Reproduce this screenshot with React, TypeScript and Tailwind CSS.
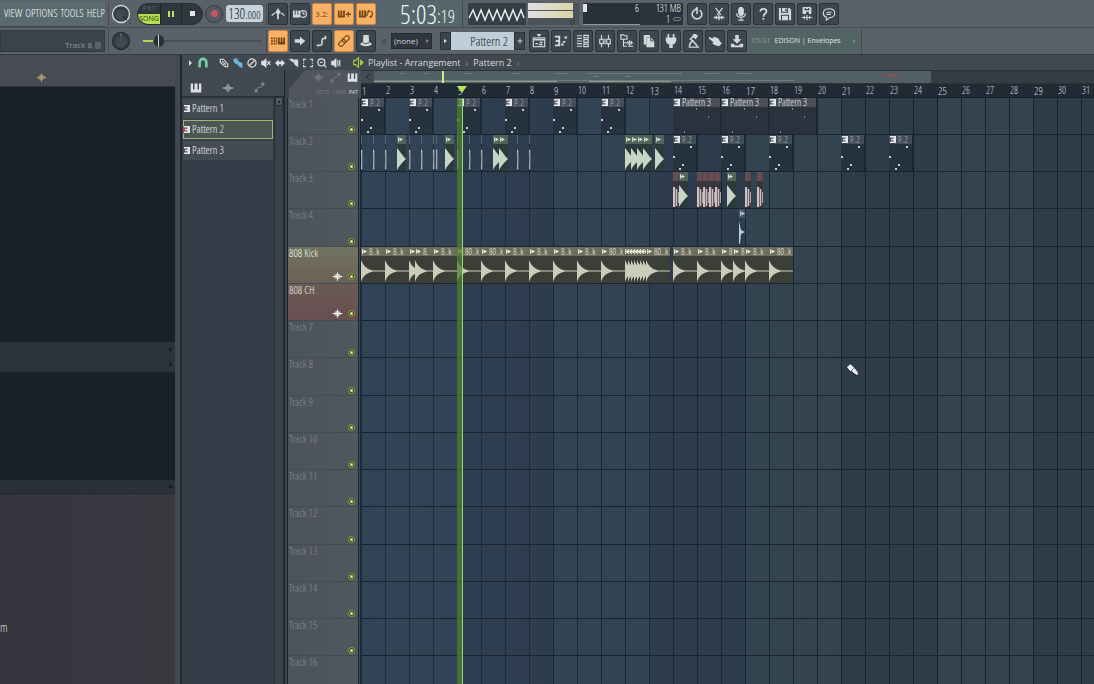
import type { ReactNode } from "react";
import clsx from "clsx";

const BAR = 24;
const narrow = "font-['Open_Sans_Condensed_Light','Roboto_Condensed',sans-serif]";
const open = "font-['Open_Sans','Noto_Sans',sans-serif]";

type Clip = { kind: string; at: number; len: number; label?: string };

const pattern2 = (at: number): Clip => ({ kind: "notes", at, len: 1, label: "P..2" });
const pattern3 = (at: number): Clip => ({ kind: "notes3", at, len: 2, label: "Pattern 3" });
const tick = (at: number): Clip => ({ kind: "tick", at, len: 0.125 });
const hit = (at: number, len = 0.375): Clip => ({ kind: "hit", at, len });
const hat = (at: number): Clip => ({ kind: "hat", at, len: 0.25 });
const kick = (at: number, len = 1, label = "8..k"): Clip => ({ kind: "kick", at, len, label });

const tracks: { name: string; tone?: string; clips: Clip[] }[] = [
  {
    name: "Track 1",
    clips: [0, 2, 4, 6, 8, 10].map(pattern2).concat([13, 15, 17].map(pattern3)),
  },
  {
    name: "Track 2",
    clips: [
      ...[0, 0.5, 1, 2, 2.5, 3, 3.125, 4, 4.5, 5, 6.5, 7].map(tick),
      hit(1.5), hit(3.5), hit(5.5, 0.25), hit(5.75),
      hit(11, 0.25), hit(11.25, 0.25), hit(11.5, 0.25), hit(11.75, 0.375), hit(12.25),
      ...[13, 15, 17, 20, 22].map(pattern2),
    ],
  },
  {
    name: "Track 3",
    clips: [
      hat(13), hit(13.25), hat(14), hat(14.25), hat(14.5), hat(14.75),
      hit(15.25), hat(16), hat(16.5),
    ],
  },
  { name: "Track 4", clips: [{ kind: "snap", at: 15.75, len: 0.25 }] },
  {
    name: "808 Kick",
    tone: "kick",
    clips: [
      kick(0), kick(1), kick(2, 0.25, ""), kick(2.25, 0.75, "8."), kick(3), kick(4, 1, "80..k"),
      kick(5, 1, "80..k"), kick(6), kick(7), kick(8), kick(9), kick(10, 1, "80..k"),
      ...[11, 11.125, 11.25, 11.375, 11.5, 11.625, 11.75].map((at) => kick(at, 0.125, "")),
      kick(11.875, 1, "80..k"),
      kick(13), kick(14), kick(15, 0.5, "8"), kick(15.5, 0.5, "8"), kick(16), kick(17, 1, "80..k"),
    ],
  },
  { name: "808 CH", tone: "hat", clips: [] },
  ...[7, 8, 9, 10, 11, 12, 13, 14, 15, 16].map((n) => ({ name: `Track ${n}`, clips: [] })),
];

function Icon({ children, size = "size-4", className }: { children: ReactNode; size?: string; className?: string }) {
  return (
    <svg viewBox="0 0 16 16" className={clsx("shrink-0", size, className)} fill="none" stroke="currentColor" strokeWidth="1.3" aria-hidden="true">
      {children}
    </svg>
  );
}

const wavePath = <path d="M1 8h14M4 6.500v3M6 4.500v7M8 2v12M10 4.500v7M12 6.500v3" strokeWidth="1.700" />;
const pianoPath = <path d="M1 2h3v8h2V2h4v8h2V2h3v12H1z" fill="currentColor" stroke="none" />;
const linkPath = (
  <>
    <path d="M3 13l2-4 6-2 2-4" />
    <circle cx="3" cy="13" r="1.800" fill="currentColor" />
    <circle cx="13" cy="3" r="1.800" fill="currentColor" />
  </>
);

const glyphs: Record<string, ReactNode> = {
  metronome: (
    <>
      <path d="M8 14V4" strokeWidth="2" />
      <path d="M1 10c1-2 2-3 4-3M15 10c-1-2-2-3-4-3" strokeWidth="1.500" />
      <path d="M8 1l3 5-3 3-3-3z" fill="currentColor" stroke="none" />
    </>
  ),
  wait: (
    <>
      <path d="M0 4h2v5h1V4h2v5h1V4h2v8H0z" fill="currentColor" stroke="none" />
      <circle cx="11.500" cy="8" r="3.800" />
      <path d="M11.500 5.500V8h2" />
    </>
  ),
  overdub: <path d="M1 4h2v6h1V4h2v6h1V4h2v8H1zM12 5.500h1.500v2H16V9h-2.500v2H12V9h-2V7.500h2z" fill="currentColor" stroke="none" />,
  loop: (
    <>
      <path d="M0 4h2v6h1V4h2v6h1V4h2v8H0z" fill="currentColor" stroke="none" />
      <path d="M10 10.500a3.300 3.300 0 0 1 1-5.500M13.500 5a3.300 3.300 0 0 1 0 6" />
      <path d="M10 3l3 1.500-2 2.500zM14.500 13l-3-1.500 2-2z" fill="currentColor" stroke="none" />
    </>
  ),
  typing: <path d="M0 4h2v2H0zM3 4h2v2H3zM0 7h2v2H0zM3 7h2v2H3zM0 10h2v2H0zM3 10h2v2H3zM6 4h1v8H6zM8 4h2v5h1V4h2v5h1V4h2v8H8z" fill="currentColor" stroke="none" />,
  arrow: <path d="M2 6h6V3l6 5-6 5v-3H2z" fill="currentColor" stroke="none" />,
  step: <path d="M2 13h3c3 0 3-1 3-4s0-4 3-4h1V2" strokeWidth="1.800" />,
  chain: (
    <g transform="rotate(-45 8 8)">
      <rect x="0.500" y="5.500" width="9" height="5" rx="2.500" />
      <rect x="6.500" y="5.500" width="9" height="5" rx="2.500" />
    </g>
  ),
  hat: (
    <>
      <path d="M5 1h6l.5 9h-7z" fill="currentColor" stroke="none" />
      <ellipse cx="8" cy="11.500" rx="6.500" ry="2.500" fill="currentColor" stroke="none" />
      <path d="M4.500 10c1.500 1.300 5.500 1.300 7 0" stroke="#3b464d" strokeWidth="1" />
    </>
  ),
  power: <path d="M5 3.500a5.500 5.500 0 1 0 6 0M8 8V1L5 4" strokeWidth="1.800" />,
  cut: <path d="M4 1l6 8M12 1L6 9M2 12h12M5 10v4M8 9v6M11 10v4" strokeWidth="1.500" />,
  mic: (
    <>
      <rect x="5.500" y="0.500" width="5" height="9" rx="2.500" fill="currentColor" />
      <path d="M3 7c0 6 10 6 10 0M8 12v3M5 15h6M5 3h6M5 6h6" />
    </>
  ),
  help: <path d="M5 5c0-4 7-4 7 0 0 2.500-3.500 2.500-3.500 6M8.500 12.500v2" strokeWidth="2" />,
  save: (
    <>
      <path d="M1 1h12l2 2v12H1z" fill="currentColor" stroke="none" />
      <path d="M4 1v5h7V1M4 15V9.500h8V15" stroke="#354048" strokeWidth="1.200" />
      <path d="M9 2v2.500" stroke="#354048" strokeWidth="1.500" />
    </>
  ),
  saveNew: (
    <>
      <path d="M3 0h9l1 1v7H3z" fill="currentColor" stroke="none" />
      <path d="M6 1v2h4V1" stroke="#354048" />
      <path d="M7 5.500h3V8H7z" fill="#354048" stroke="none" />
      <path d="M2 12h12M5 10v4M8 9v6M11 10v4" />
    </>
  ),
  chat: (
    <>
      <path d="M8 2c4 0 6.500 2 6.500 5S12 12 9 12l-4 3v-3.300C3 11 1.500 9.500 1.500 7c0-3 2.500-5 6.500-5z" />
      <path d="M5 6h6M5 8.500h5" />
    </>
  ),
  playlist: (
    <>
      <path d="M6 0h4L8 2.500z" fill="currentColor" />
      <rect x="1.500" y="4.500" width="13" height="10" />
      <path d="M2 6.500h12M4 11h3M8 12h4M9 9.500h3" strokeWidth="1.700" />
    </>
  ),
  roll: <path d="M1 3h5M2 8h4M1 13h5M6 2v12M8 12h3M10 9h3M12 4h3" strokeWidth="2.200" />,
  rack: <path d="M1 2h6M1 5h6M1 8h6M1 11h6M1 14h6M9 1.500h5v3H9zM9 6.500h5v3H9zM9 11.500h5v3H9z" />,
  mixer: (
    <>
      <path d="M4 1v5M4 11v4M12 1v5M12 11v4" />
      <path d="M2 6h4v5H2zM10 6h4v5h-4z" />
      <path d="M8 5v7" />
    </>
  ),
  browser: (
    <>
      <path d="M1 1h3l1 1h3v4H1z" />
      <path d="M4 6v8h4M4 10h4M9 8v4M11 7v6M13 8v4M9 14h6M9 10h6" />
    </>
  ),
  copy: (
    <>
      <path d="M2 1h7v3H5v8H2z" fill="currentColor" stroke="none" />
      <path d="M5 4h5l4 4v7H5z" fill="currentColor" stroke="none" />
      <path d="M10 4v4h4" stroke="#354048" strokeWidth="1" />
    </>
  ),
  plug: <path d="M4 0h2v4h4V0h2v4h2v3c0 3-2 4-4 5v4H6v-4C4 11 2 10 2 7V4h2z" fill="currentColor" stroke="none" />,
  tempo: (
    <>
      <path d="M3 15h12M4 14c0-4 2-5 4-6L5 6l4-4M8 8l5 6" strokeWidth="1.700" />
      <path d="M9 0l4 2-2 3-3-2z" fill="currentColor" />
    </>
  ),
  brush: <path d="M1 3l4 2 2-2 5 2 2 4 2 1-3 4-4-1-4-2 1-2-5-4z" fill="currentColor" stroke="none" />,
  download: <path d="M6 1h4v5h3L8 11 3 6h3zM1 11h3l2 2h4l2-2h3v4H1z" fill="currentColor" stroke="none" />,
};

function ToolButton({ name, lit, label }: { name: string; lit?: boolean; label?: string }) {
  return (
    <button
      aria-label={name}
      className={clsx(
        "flex h-[22px] w-[20px] shrink-0 items-center justify-center rounded-[2px] border",
        lit ? "border-[#d28446] bg-[#f9b163] text-[#744816]" : "border-[#2a3239] bg-[#3b464d] text-[#d3d9db]",
      )}
    >
      {label ? <span className={clsx(open, "text-[8px]")}>{label}</span> : <Icon size="size-[14px]">{glyphs[name]}</Icon>}
    </button>
  );
}

function Knob({ bright }: { bright?: boolean }) {
  return (
    <svg viewBox="0 0 24 24" className="size-6 shrink-0" aria-hidden="true">
      <circle cx="12" cy="12" r="8.500" fill="#343d44" stroke={bright ? "#d5dadc" : "#262e35"} strokeWidth="1.300" />
      <circle cx="12" cy="13" r="5.500" fill="#414a51" />
      <path d={bright ? "M14 14l4 4" : "M12 4v4"} stroke={bright ? "#252c32" : "#5b656c"} strokeWidth="1.500" />
      <circle cx="21" cy="21" r="0.800" fill="#30383e" />
    </svg>
  );
}

function TopRow() {
  return (
    <div className="flex h-[28px] items-center border-b border-[#474d54]">
      <nav className={clsx(narrow, "flex h-[26px] w-[105px] shrink-0 items-center gap-[3px] border-b border-[#3d464b] bg-[#5a6a6e] pl-[4px] text-[11px] text-[#f4f7f7]")}>
        <a href="#view">VIEW</a>
        <a href="#options">OPTIONS</a>
        <a href="#tools">TOOLS</a>
        <a href="#help">HELP</a>
      </nav>
      <div className="ml-[3px] flex w-[158px] shrink-0 items-center border-l border-[#454b52]">
        <Knob bright />
        <div className="ml-[4px] flex h-[22px] w-[66px] shrink-0 overflow-hidden rounded-full border border-[#272e34] bg-[#30383e]">
          <button className={clsx(open, "flex w-[22px] flex-col text-[7px] leading-[10px]")}>
            <span className="w-full text-[#59626a]">PAT</span>
            <span className="w-full bg-[#b7dc4f] text-[#2c3a12]">SONG</span>
          </button>
          <button aria-label="Pause" className="flex flex-1 items-center justify-center gap-[2px] border-x border-[#20272c]">
            <span className="h-[6px] w-[2px] bg-[#c6de6b]" />
            <span className="h-[6px] w-[2px] bg-[#c6de6b]" />
          </button>
          <button aria-label="Stop" className="flex flex-1 items-center justify-center">
            <span className="size-[5px] bg-[#e3e7e8]" />
          </button>
        </div>
        <button aria-label="Record" className="ml-[2px] flex size-[18px] shrink-0 items-center justify-center rounded-full border border-[#353b42] bg-[#555a62]">
          <span className="size-[7px] rounded-full bg-[#cb5563]" />
        </button>
        <button aria-label="Tempo" className={clsx(narrow, "ml-[3px] flex h-[17px] w-[37px] shrink-0 items-baseline justify-center rounded-[3px] bg-[#c6d2dc] text-[14px] leading-[17px] text-[#141c24]")}>
          130<span className="text-[11px]">.000</span>
        </button>
      </div>
      <div className="flex shrink-0 gap-[2px] border-l border-[#454b52] pl-px">
        <ToolButton name="metronome" />
        <ToolButton name="wait" />
        <ToolButton name="countdown" lit label="3.2:" />
        <ToolButton name="overdub" lit />
        <ToolButton name="loop" lit />
      </div>
      <div className={clsx(narrow, "ml-[3px] flex h-[26px] w-[84px] shrink-0 items-center justify-end border-r border-[#424b50] bg-[#56666a] pr-[7px] text-[#eef6f8]")}>
        <span className="text-[26px] leading-[26px]">5:03</span>
        <span className="pt-[4px] text-[18px] leading-[22px]">:19</span>
      </div>
      <svg viewBox="0 0 58 22" className="ml-[5px] h-[22px] w-[58px] shrink-0 bg-[#343e45]" aria-hidden="true">
        <path d="M1 15l4-8 4 10 4-10 4 10 4-10 4 10 4-10 4 10 4-10 4 10 4-10 4 10 4-10 3 8" fill="none" stroke="#e7ebec" strokeWidth="1.500" />
      </svg>
      <div className="ml-[2px] flex h-[22px] w-[51px] shrink-0 flex-col gap-px bg-[#4a535a]">
        <span className="h-[7px] w-[45px] bg-linear-to-r from-[#dfe1e1] to-[#ddd3a8]" />
        <span className="h-[7px] w-[45px] bg-linear-to-r from-[#dfe1e1] to-[#ddd3a8]" />
        <span className="mt-px ml-[42px] size-[5px] rounded-full border border-[#333c43]" />
      </div>
      <div className={clsx(narrow, "ml-[4px] flex h-[22px] w-[100px] shrink-0 bg-[#2b343a] text-[10px] leading-[11px] text-[#f0f4f5]")}>
        <div className="flex w-[57px] justify-between border-b border-[#8f989c] bg-[#28313a] pr-px">
          <span className="mt-px h-[8px] w-[4px] bg-[#e2e6e7]" />
          <span>6</span>
        </div>
        <div className="flex flex-1 flex-col items-end pr-[2px]">
          <span>131 MB</span>
          <span className="flex items-center gap-[3px]">
            1<span className="h-[4px] w-[8px] rounded-full border border-[#707a80]" />
          </span>
        </div>
      </div>
      <div className="ml-[4px] flex gap-[2px]">
        {["power", "cut", "mic", "help", "save", "saveNew", "chat"].map((name) => (
          <ToolButton key={name} name={name} />
        ))}
      </div>
    </div>
  );
}

function SecondRow() {
  return (
    <div className="flex h-[27px] items-center border-b border-[#353b42]">
      <div className={clsx(open, "flex h-[22px] w-[105px] shrink-0 items-end justify-end gap-[3px] border border-[#30373d] bg-[#3b444a] pr-[3px] text-[8px] text-[#8d969b]")}>
        Track 8
        <span className="mb-[2px] h-[7px] w-[6px] bg-[#596268]" />
      </div>
      <div className="ml-[3px] flex w-[158px] shrink-0 items-center border-l border-[#454b52]">
        <Knob />
        <input
          type="range"
          aria-label="Master pitch"
          defaultValue={10}
          className="ml-[10px] h-[14px] w-[118px] appearance-none bg-[linear-gradient(90deg,#b4d34f_0_10px,#464d54_10px_100%)] bg-size-[100%_2px] bg-center bg-no-repeat [&::-webkit-slider-thumb]:h-[12px] [&::-webkit-slider-thumb]:w-[10px] [&::-webkit-slider-thumb]:appearance-none [&::-webkit-slider-thumb]:rounded-full [&::-webkit-slider-thumb]:bg-[linear-gradient(90deg,#283036_0_4px,#cfd5d7_4px_5px,#283036_5px)]"
        />
      </div>
      <div className="flex shrink-0 gap-[2px] border-l border-[#454b52] pl-px">
        <ToolButton name="typing" lit />
        <ToolButton name="arrow" />
        <ToolButton name="step" />
        <ToolButton name="chain" lit />
        <ToolButton name="hat" />
      </div>
      <span className="ml-[6px] h-[5px] w-[4px] shrink-0 bg-[#4a5158]" />
      <div className="relative ml-[5px] h-[16px] w-[41px] shrink-0">
        <select aria-label="Snap" className={clsx(open, "block h-full w-full appearance-none border border-[#252b31] bg-[#30363d] py-0 pl-[2px] text-[8px] leading-[14px] text-[#cfd4d7]")}>
          <option>(none)</option>
        </select>
        <span className="pointer-events-none absolute top-[6px] right-[3px] border-y-2 border-l-3 border-y-transparent border-l-[#7c858a]" />
      </div>
      <button aria-label="Previous pattern" className="ml-[8px] flex h-[18px] w-[11px] shrink-0 items-center justify-center border border-[#2a3239] bg-[#3a444b]">
        <span className="border-y-2 border-l-3 border-y-transparent border-l-[#dfe4e6]" />
      </button>
      <button className={clsx(narrow, "h-[18px] w-[63px] shrink-0 bg-[#bfcdd8] pr-[6px] text-right text-[13px] leading-[18px] text-[#141d26]")}>Pattern 2</button>
      <button aria-label="New pattern" className="flex h-[18px] w-[11px] shrink-0 items-center justify-center border border-[#2a3239] bg-[#3a444b] text-[#cdd3d5]">
        <Icon size="size-[6px]"><path d="M8 1v14M1 8h14" strokeWidth="2.500" /></Icon>
      </button>
      <div className="ml-[4px] flex shrink-0 gap-[2px]">
        {["playlist", "roll", "rack", "mixer", "browser", "copy", "plug", "tempo", "brush", "download"].map((name) => (
          <ToolButton key={name} name={name} />
        ))}
      </div>
      <a href="#news" className={clsx(open, "ml-[2px] flex h-[22px] w-[110px] shrink-0 items-center bg-[#526364] pl-[3px] text-[7px] text-[#dfe6e6]")}>
        <span className="mr-[4px] text-[#8e9b9c]">05/31</span>
        <span className="whitespace-nowrap">EDISON | Envelopes</span>
        <span className="mr-[3px] ml-auto border-y-2 border-l-3 border-y-transparent border-l-[#7f8d8e]" />
      </a>
      <span className="ml-[2px] h-full w-px bg-[#454b52]" />
    </div>
  );
}

function Browser() {
  return (
    <aside className="flex w-[175px] shrink-0 flex-col">
      <div className="h-[32px] border-b border-[#2c343a] bg-[#464c52] pt-[17px] pl-[36px] text-[#ad9c70]">
        <Icon size="size-[11px]">{wavePath}</Icon>
      </div>
      <div className="h-[255px] bg-[#1a2129]" />
      <div className="flex h-[31px] flex-col items-end justify-around border-b border-[#1b2228] bg-[#2b333a] pr-[3px]">
        <span className="size-[3px] bg-[#182027]" />
        <span className="size-[3px] bg-[#182027]" />
      </div>
      <div className="h-[107px] bg-[#18212a]" />
      <div className="flex h-[14px] items-center justify-end border-b border-[#1f262c] bg-[#2a3238] pr-[3px]">
        <span className="size-[3px] bg-[#182027]" />
      </div>
      <div className={clsx(narrow, "flex-1 bg-linear-to-r from-[#35353e] to-[#3a3940] pt-[127px] text-[12px] leading-[14px] text-[#d8dbde]")}>m</div>
    </aside>
  );
}

function PatternIcon() {
  return (
    <svg viewBox="0 0 6 7" className="h-[7px] w-[6px] shrink-0" aria-hidden="true">
      <path d="M0 0h6v7H0V5.500h3.500V4.200H1V2.800h2.500V1.500H0z" fill="#e4e8ea" />
    </svg>
  );
}

function Picker() {
  return (
    <section className="flex w-[102px] shrink-0 flex-col bg-[#363c48]">
      <div className="flex h-[27px] items-center gap-[20px] border-b border-[#242b34] bg-[#424851] pt-[9px] pl-[8px]">
        <Icon size="size-[12px]" className="text-[#e0e3e5]">{pianoPath}</Icon>
        <Icon size="size-[12px]" className="text-[#93999f]">{wavePath}</Icon>
        <Icon size="size-[11px]" className="text-[#858b92]">{linkPath}</Icon>
      </div>
      <div className="flex flex-1">
        <ul className={clsx(narrow, "flex flex-1 flex-col gap-[2px] pt-[2px] pl-px text-[11px] text-[#f0f3f4]")}>
          {["Pattern 1", "Pattern 2", "Pattern 3"].map((name) => (
            <li key={name}>
              <button
                className={clsx(
                  "flex h-[19px] w-full items-center gap-[2px] border",
                  name === "Pattern 2" ? "border-[#a0b46c] bg-[#4b5752]" : "border-transparent bg-[#444b53]",
                )}
              >
                {name === "Pattern 2" && <span className="-ml-px border-y-4 border-l-4 border-y-transparent border-l-[#bd3d5c]" />}
                <span className={clsx(name === "Pattern 2" && "-ml-[5px]")}><PatternIcon /></span>
                {name}
              </button>
            </li>
          ))}
        </ul>
        <div className="ml-px w-[10px] border-x border-[#262d36] bg-[#3a414c]">
          <span className="flex h-[9px] items-center justify-center border border-[#2a3139] bg-[#505760]">
            <span className="size-[2px] bg-[#20272e]" />
          </span>
        </div>
      </div>
    </section>
  );
}

function ClipShape({ kind }: { kind: string }) {
  if (kind === "notes")
    return <path d="M0 12h2v2H0zM17 2h2v2h-2zM9 20h2v2H9zM6 24h2v2H6z" fill="#c7ced2" />;
  if (kind === "notes3")
    return <path d="M23 1h1v2h-1zM35 9h1v2h-1zM11 24h1v2h-1z" fill="#7d848b" />;
  if (kind === "tick") return <path d="M0 6c1 5 1 14 0 19h1V6z" fill="#c3cfc8" stroke="#c3cfc8" strokeWidth="0.500" />;
  if (kind === "hit") return <path d="M0 4c2 2 5 7 9 11-4 4-7 7-9 11z" fill="#c6d5c4" />;
  if (kind === "hat") return <path d="M0 6h2.200v20H0zM2.800 8h1.500v17H2.800zM5 11h.8v11H5z" fill="#cfbfc1" />;
  if (kind === "snap") return <path d="M0 3l2 9 4 2-4 2-1 10H0z" fill="#bccddb" />;
  return <path d="M0 4c2 5 5 9 12 10.500h12v1H12C5 17 2 20 0 26z" fill="#cbccba" />;
}

function ClipView({ clip }: { clip: Clip }) {
  const { kind, at, len, label } = clip;
  const pattern = kind.startsWith("notes");
  const bare = kind === "tick";
  return (
    <div
      className={clsx(
        "absolute inset-y-0 flex flex-col overflow-x-clip",
        pattern && "border-r border-[#1b2630]",
        kind === "notes" && "bg-[#26323d]",
        kind === "notes3" && "bg-[#2a323d]",
        kind === "kick" && "bg-[#3b3f38]",
        kind === "hit" && "bg-[#2c3a3c]",
        kind === "hat" && "bg-[#39353d]",
      )}
      style={{ left: at * BAR, width: Math.ceil(len * BAR) }}
    >
      <div
        className={clsx(
          narrow,
          "flex h-[9px] shrink-0 items-center gap-[2px] text-[9px] leading-[9px] whitespace-nowrap",
          kind === "notes" && "bg-[#434d58] pl-px text-[#a9b1b8]",
          kind === "notes3" && "bg-[#4a505a] pl-px text-[#eff2f3]",
          kind === "kick" && "bg-[#6c6d5d] text-[#ecece0]",
          kind === "hit" && "bg-[#52645a] text-[#d1ddce]",
          kind === "hat" && "border-r border-[#4f434b] bg-[#664d53]",
          kind === "snap" && "bg-[#475866] text-[#b9c8d2]",
          bare && "border-l border-[#526571]",
        )}
      >
        {pattern && <PatternIcon />}
        {(kind === "kick" || kind === "hit" || kind === "snap") && (
          <svg viewBox="0 0 6 6" className={clsx("size-[5px] shrink-0", len > 0.125 && "ml-px")} fill="currentColor" aria-hidden="true">
            <path d="M0 0h1v2.500h1V0.500l4 2.500-4 2.500V3.500H1V6H0z" />
          </svg>
        )}
        {label && <span className={clsx(kind === "notes3" && "text-[10px]")}>{label}</span>}
      </div>
      <svg className="h-[27px] w-[48px] shrink-0" viewBox="0 0 48 27" aria-hidden="true">
        <ClipShape kind={kind} />
      </svg>
    </div>
  );
}

const rowHeight = (i: number) => (i % 4 === 3 ? "h-[38px]" : "h-[37px]");

function TrackHeaders() {
  return (
    <div className={clsx(narrow, "w-[70px] shrink-0 text-[11px] leading-[11px]")}>
      {tracks.map((track, i) => (
        <div
          key={track.name}
          className={clsx(
            "flex items-start justify-between border-b border-[#434b53] pr-[3px]",
            rowHeight(i),
            !track.tone && "bg-linear-to-r from-[#4c545b] to-[#50575d] text-[#858d93]",
            track.tone === "kick" && "bg-linear-to-b from-[#70745f] to-[#6b6058] text-[#f6f6f0]",
            track.tone === "hat" && "bg-linear-to-b from-[#6b5b56] to-[#684e52] text-[#f6f0ee]",
          )}
        >
          <span className="pl-px whitespace-nowrap">{track.name}</span>
          <span className="flex items-center gap-[5px] self-end pb-px">
            {track.tone && <Icon size="size-[11px]" className="text-[#eceae2]">{wavePath}</Icon>}
            <button aria-label={`Mute ${track.name}`} className="flex size-[7px] items-center justify-center rounded-full border border-[#8fa63f] bg-[#34401f]">
              <span className="size-[3px] rounded-full bg-[#d9eba0]" />
            </button>
          </span>
        </div>
      ))}
    </div>
  );
}

function Overview() {
  return (
    <div className="flex h-[14px] border-y border-[#2a323a] bg-[#353d44]">
      <svg className="h-[12px] w-[570px] shrink-0 bg-[#526065]" viewBox="0 0 570 12" aria-hidden="true">
        <rect width="13" height="12" fill="#434c53" />
        <path d="M9 3L5 6l4 3" fill="none" stroke="#262e35" />
        <path d="M13 9.500h420M38 2.500h6M62 2.500h6M103 2.500h9M150 2.500h9M194 2.500h13M226 2.500h95M342 2.500h16M376 2.500h16M232 5.500h6M264 5.500h6" stroke="#6f7d7a" />
        <path d="M13 10.500h183M228 10.500h82" stroke="#919c88" />
        <path d="M525 4.500h12" stroke="#8e5157" strokeWidth="2" />
        <path d="M82 0v12" stroke="#c9f07c" strokeWidth="2" />
      </svg>
    </div>
  );
}

function Ruler() {
  return (
    <div className={clsx(narrow, "flex h-[14px] items-center overflow-x-clip border-b border-[#17202a] bg-[#212b36] leading-[13px] text-[#d2d9de]")}>
      {Array.from({ length: 31 }, (_, i) => (
        <span key={i} className={clsx("shrink-0 pl-px", i === 30 ? "w-[12px]" : "w-[24px]", i % 4 === 0 ? "text-[11px]" : "text-[10px]")}>
          {i + 1}
        </span>
      ))}
    </div>
  );
}

function PlaylistToolbar() {
  return (
    <div className="flex h-[15px] items-center bg-[#424850] pl-[7px] text-[#dde1e3]">
      <span className="border-y-3 border-l-3 border-y-transparent border-l-[#d5dadc]" />
      <div className="ml-[5px] flex w-[22px] text-[#6ed3a2]">
        <Icon size="size-[12px]"><path d="M3.500 14V7a4.500 4.500 0 0 1 9 0v7" strokeWidth="3.500" /></Icon>
      </div>
      <div className="flex gap-[4px]">
        <Icon size="size-[10px]"><path d="M2 2h5l7 8v4h-4L2 7zM5 5l6 6" strokeWidth="1.800" /></Icon>
        <Icon size="size-[10px]" className="text-[#6db4de]"><path d="M1 2l5-1 3 5 2 1 4 2-1 3 1 3-4-1-4-4-5-3z" fill="currentColor" /></Icon>
        <Icon size="size-[10px]"><circle cx="8" cy="8" r="6.500" strokeWidth="2" /><path d="M4 12l8-8" strokeWidth="2" /></Icon>
        <Icon size="size-[10px]"><path d="M1 5h3l4-4v14l-4-4H1z" fill="currentColor" /><path d="M10 5l5 6M15 5l-5 6" strokeWidth="1.800" /></Icon>
        <Icon size="size-[10px]"><path d="M0 8l6-6v4h4V2l6 6-6 6v-4H6v4z" fill="currentColor" stroke="none" /></Icon>
        <Icon size="size-[10px]"><path d="M1 2h6v5zM9 3h5v11l-5-4z" fill="currentColor" /></Icon>
        <Icon size="size-[10px]"><path d="M1 5V2h4M11 2h4v3M15 11v3h-4M5 14H1v-3M1 7v2M15 7v2" strokeWidth="1.800" /></Icon>
        <Icon size="size-[10px]"><circle cx="7" cy="7" r="5.500" strokeWidth="2" /><path d="M11 11l4 4M5 7h4" strokeWidth="2" /></Icon>
        <Icon size="size-[10px]"><path d="M1 5h3l4-4v14l-4-4H1z" fill="currentColor" /><path d="M11 3v10M14 3v10" strokeWidth="1.800" /></Icon>
      </div>
      <Icon size="size-[11px]" className="ml-[12px] text-[#a6cf4d]"><path d="M1 5h3l4-4v14l-4-4H1z" strokeWidth="1.700" /><path d="M11 4l4 4-4 4z" fill="currentColor" /></Icon>
      <h1 className={clsx(open, "ml-[4px] flex gap-[5px] text-[9px] leading-[14px] whitespace-nowrap text-[#d9dddf]")}>
        <span>Playlist - Arrangement</span>
        <span className="text-[#8a9197]">›</span>
        <span>Pattern 2</span>
        <span className="text-[#8a9197]">›</span>
      </h1>
    </div>
  );
}

function Playlist() {
  return (
    <section className="flex min-w-0 flex-1 flex-col border-l border-[#1e252d] bg-[#4a5158]">
      <div className="flex h-[28px] shrink-0">
        <div className="w-[73px] shrink-0 bg-[#3d444c]">
          <div className="flex h-full flex-col items-end justify-between bg-[#50565c] pt-[2px] [clip-path:polygon(4px_100%,4px_70%,20px_0,100%_0,100%_100%)]">
            <div className="flex items-center gap-[6px] text-[#717980]">
              <Icon size="size-[11px]">{wavePath}</Icon>
              <Icon size="size-[11px]">{linkPath}</Icon>
              <Icon size="size-[11px]" className="text-[#dfe3e5]">{pianoPath}</Icon>
            </div>
            <div className={clsx(open, "flex gap-[3px] text-[5px] leading-[12px] text-[#757d83]")}>
              <span>NOTE</span>
              <span>CHAN</span>
              <span className="text-[#dfe3e5]">PAT</span>
            </div>
          </div>
        </div>
        <div className="min-w-0 flex-1 pl-[3px]">
          <Overview />
          <Ruler />
        </div>
      </div>
      <div className="flex min-h-0 flex-1 overflow-hidden">
        <div className="w-[3px] shrink-0 border-r border-[#20272f] bg-[#3c434b]" />
        <TrackHeaders />
        <div className="w-[3px] shrink-0 border-x border-[#1c2731] bg-[#3e4a52]" />
        <div className="relative min-w-0 flex-1 self-start bg-[linear-gradient(90deg,#2c426066,#2c426000_75%),repeating-linear-gradient(90deg,#16232f_0_1px,transparent_1px_24px),repeating-linear-gradient(90deg,#34444f_0_96px,#2e3c49_96px_192px)]">
          {tracks.map((track, i) => (
            <div key={track.name} className={clsx("relative border-b border-[#182531]", rowHeight(i))}>
              {track.clips.map((clip, n) => (
                <ClipView key={n} clip={clip} />
              ))}
            </div>
          ))}
          <div className="pointer-events-none absolute inset-y-0 left-[96px] w-[6px] border-r border-[#9bd974] bg-[#4f8233]/75" />
          <Icon size="size-[12px]" className="pointer-events-none absolute top-[266px] left-[485px] text-[#f0f3f4]">
            <path d="M2 4l4-3 4 4-4 4zM8 9l3-3 4 5 0 3-3-1z" fill="currentColor" />
            <path d="M9 13l5 2" stroke="#1c242b" />
          </Icon>
        </div>
      </div>
    </section>
  );
}

function PlayheadMarker() {
  return <span className="pointer-events-none absolute top-[31px] left-[275px] border-x-5 border-t-7 border-x-transparent border-t-[#b5e84a]" />;
}

export default function App() {
  return (
    <div className="flex h-screen flex-col overflow-hidden bg-[#3d444c]">
      <header className="shrink-0 bg-[#5a6168]">
        <TopRow />
        <SecondRow />
      </header>
      <main className="flex min-h-0 flex-1">
        <Browser />
        <div className="w-[7px] shrink-0 border-r-2 border-[#232a33] bg-[#424852]" />
        <div className="relative flex min-w-0 flex-1 flex-col">
          <PlaylistToolbar />
          <div className="flex min-h-0 flex-1">
            <Picker />
            <Playlist />
          </div>
          <PlayheadMarker />
        </div>
      </main>
    </div>
  );
}
